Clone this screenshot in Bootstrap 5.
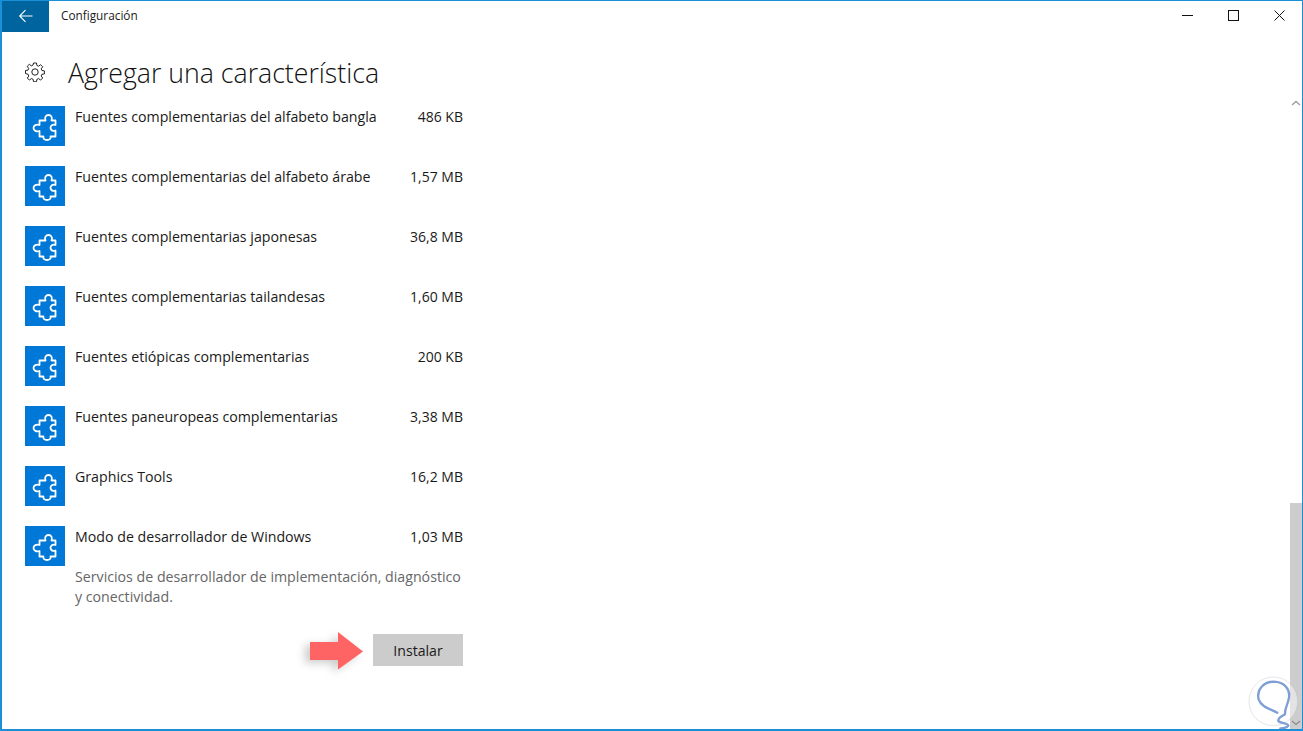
<!DOCTYPE html>
<html lang="es">
<head>
  <meta charset="UTF-8">
  <meta name="viewport" content="width=device-width, initial-scale=1.0">
  <title>Configuración</title>
  <link href="https://cdn.jsdelivr.net/npm/bootstrap@5.3.3/dist/css/bootstrap.min.css" rel="stylesheet">
  <style>
    html, body {
      height: 100%;
      overflow: hidden;
    }

    body {
      font-family: "Open Sans", "Liberation Sans", sans-serif;
      color: #1a1a1a;
      background: #fff;
    }

    .app-window {
      height: 731px;
      border: 1px solid #1b8fd8;
      border-width: 1px 1px 2px 2px;
      position: relative;
      overflow: hidden;
    }

    .title-bar {
      height: 31px;
    }

    .back-btn {
      width: 47px;
      background: #00659f;
      border: 0;
      padding: 0 0 2px;
    }

    .app-name {
      font-size: 11.8px;
      margin-left: 12px;
      padding-bottom: 2px;
    }

    .win-ctrl {
      width: 46px;
      padding-bottom: 2px;
    }

    .head-row {
      height: 74px;
      padding-left: 23px;
      padding-top: 6px;
    }

    .gear-icon {
      flex: none;
    }

    .page-title {
      font-size: 26.7px;
      font-weight: 300;
      margin: 2px 0 0 23px;
      color: #111;
    }

    .feature-list {
      width: 438px;
      margin-left: 23px;
    }

    .feature-row {
      height: 60px;
    }

    .feature-row.is-open {
      height: auto;
    }

    .plugin-tile {
      width: 40px;
      height: 40px;
      background: #0078d7;
      flex: none;
    }

    .feature-text {
      font-size: 14.2px;
      line-height: 20px;
      padding: 1px 0 0 10px;
    }

    .feature-size {
      font-size: 14px;
      line-height: 20px;
      padding-top: 1px;
    }

    .feature-desc {
      font-size: 14.2px;
      line-height: 20px;
      color: #666;
      margin: 0;
      padding: 1px 0 0 50px;
    }

    .install-row {
      margin-top: 18px;
    }

    .install-btn {
      width: 90px;
      height: 32px;
      padding: 1px 0 0;
      border: 0;
      border-radius: 0;
      background: #ccc;
      color: #1a1a1a;
      font-size: 14.1px;
    }

    .arrow-mark {
      margin-right: 5px;
      margin-top: 6px;
      overflow: visible;
      filter: drop-shadow(-5px 3px 4px rgba(0, 0, 0, .2));
    }

    .scroll-rail {
      width: 12px;
      flex: none;
    }

    .scroll-up {
      margin-top: -6px;
      margin-left: 1px;
    }

    .scroll-thumb {
      background: #cdcdcd;
      height: 226px;
      padding: 0 0 3px 1px;
    }

    .logo-mark {
      position: absolute;
      right: -1px;
      bottom: -2px;
    }
  </style>
</head>
<body>
  <svg width="0" height="0" class="d-block">
    <symbol id="puzzle" viewBox="0 0 40 40">
      <path d="M14.500 14.500h6c-1.200-3 .3-5.500 3-5.500s4.200 2.500 3 5.500h4V19c-3-1-5 .5-5 2.800s2 3.700 5 2.700v6h-5c.8 2.400-1.200 3.500-3.500 3.500s-4.300-1.100-3.500-3.500h-4V25c-3 1-6-.3-6-3s3-4 6-3z" fill="none" stroke="#fff" stroke-width="1.800" stroke-linejoin="round"/>
    </symbol>
  </svg>

  <div class="app-window d-flex flex-column">
    <div class="title-bar d-flex align-items-stretch flex-none">
      <button type="button" class="back-btn d-flex align-items-center justify-content-center" aria-label="Atrás">
        <svg width="16" height="14" viewBox="0 0 16 14"><path d="M14.500 7H2M7.500 1.200 1.700 7l5.800 5.800" fill="none" stroke="#fff" stroke-width="1.100"/></svg>
      </button>
      <span class="app-name d-flex align-items-center">Configuración</span>
      <div class="ms-auto d-flex">
        <div class="win-ctrl d-flex align-items-center justify-content-center">
          <svg width="11" height="11" viewBox="0 0 11 11"><path d="M0 5.500h11" stroke="#111" stroke-width="1"/></svg>
        </div>
        <div class="win-ctrl d-flex align-items-center justify-content-center">
          <svg width="11" height="11" viewBox="0 0 11 11"><rect x=".5" y=".5" width="10" height="10" fill="none" stroke="#111"/></svg>
        </div>
        <div class="win-ctrl d-flex align-items-center justify-content-center">
          <svg width="11" height="11" viewBox="0 0 11 11"><path d="M.5.500l10 10M10.500.500l-10 10" stroke="#111" stroke-width="1"/></svg>
        </div>
      </div>
    </div>

    <div class="head-row d-flex align-items-center">
      <svg class="gear-icon" width="20" height="20" viewBox="0 0 20 20">
        <circle cx="10" cy="10" r="3.200" fill="none" stroke="#222" stroke-width="1"/>
        <path d="M8.500 1h3l.4 2.500 1.700.7 2-1.500 2.100 2.100-1.500 2 .7 1.700 2.500.4v3l-2.500.4-.7 1.700 1.500 2-2.100 2.100-2-1.500-1.700.7-.4 2.500h-3l-.4-2.500-1.700-.7-2 1.500-2.100-2.100 1.500-2-.7-1.700L.5 11.500v-3l2.500-.4.7-1.700-1.500-2 2.100-2.100 2 1.500 1.700-.7z" fill="none" stroke="#222" stroke-width="1" stroke-linejoin="round"/>
      </svg>
      <h1 class="page-title">Agregar una característica</h1>
    </div>

    <div class="d-flex flex-grow-1">
      <div class="flex-grow-1">
        <div class="feature-list">
          <div class="feature-row d-flex">
            <div class="plugin-tile"><svg width="40" height="40"><use href="#puzzle"/></svg></div>
            <div class="feature-text flex-grow-1">Fuentes complementarias del alfabeto bangla</div>
            <div class="feature-size">486 KB</div>
          </div>
          <div class="feature-row d-flex">
            <div class="plugin-tile"><svg width="40" height="40"><use href="#puzzle"/></svg></div>
            <div class="feature-text flex-grow-1">Fuentes complementarias del alfabeto árabe</div>
            <div class="feature-size">1,57 MB</div>
          </div>
          <div class="feature-row d-flex">
            <div class="plugin-tile"><svg width="40" height="40"><use href="#puzzle"/></svg></div>
            <div class="feature-text flex-grow-1">Fuentes complementarias japonesas</div>
            <div class="feature-size">36,8 MB</div>
          </div>
          <div class="feature-row d-flex">
            <div class="plugin-tile"><svg width="40" height="40"><use href="#puzzle"/></svg></div>
            <div class="feature-text flex-grow-1">Fuentes complementarias tailandesas</div>
            <div class="feature-size">1,60 MB</div>
          </div>
          <div class="feature-row d-flex">
            <div class="plugin-tile"><svg width="40" height="40"><use href="#puzzle"/></svg></div>
            <div class="feature-text flex-grow-1">Fuentes etiópicas complementarias</div>
            <div class="feature-size">200 KB</div>
          </div>
          <div class="feature-row d-flex">
            <div class="plugin-tile"><svg width="40" height="40"><use href="#puzzle"/></svg></div>
            <div class="feature-text flex-grow-1">Fuentes paneuropeas complementarias</div>
            <div class="feature-size">3,38 MB</div>
          </div>
          <div class="feature-row d-flex">
            <div class="plugin-tile"><svg width="40" height="40"><use href="#puzzle"/></svg></div>
            <div class="feature-text flex-grow-1">Graphics Tools</div>
            <div class="feature-size">16,2 MB</div>
          </div>
          <div class="feature-row is-open">
            <div class="d-flex">
              <div class="plugin-tile"><svg width="40" height="40"><use href="#puzzle"/></svg></div>
              <div class="feature-text flex-grow-1">Modo de desarrollador de Windows</div>
              <div class="feature-size">1,03 MB</div>
            </div>
            <p class="feature-desc">Servicios de desarrollador de implementación, diagnóstico<br>y conectividad.</p>
            <div class="install-row d-flex justify-content-end align-items-center">
              <svg class="arrow-mark" width="64" height="44" viewBox="0 0 64 44">
                <path d="M6 11h28V1l25 19.500-25 18V29H6z" fill="#ff6464"/>
              </svg>
              <button type="button" class="btn install-btn">Instalar</button>
            </div>
          </div>
        </div>
      </div>
      <div class="scroll-rail d-flex flex-column justify-content-between">
        <svg class="scroll-up" width="10" height="6" viewBox="0 0 10 6"><path d="M1 5l4-3.500L9 5" fill="none" stroke="#a0a0a0" stroke-width="1.500"/></svg>
        <div class="scroll-thumb d-flex align-items-end">
          <svg width="10" height="6" viewBox="0 0 10 6"><path d="M1 1l4 3.500L9 1" fill="none" stroke="#8a8a8a" stroke-width="1.200"/></svg>
        </div>
      </div>
    </div>

    <svg class="logo-mark" width="60" height="60" viewBox="0 0 180 180">
      <circle cx="91" cy="91" r="73" fill="#fff" fill-opacity=".45" stroke="#aeb4c2" stroke-opacity=".5" stroke-width="2"/>
      <path d="M103 125C80 113 55 108 47 85 40 58 60 32 92 32c33 1 50 23 46 48-3 20-13 30-12 50-8 5-22 10-20 20 6 8 29 5 30 14-4 6-16 8-24 8" fill="none" stroke="#7f9fd4" stroke-width="7" stroke-linecap="round" stroke-linejoin="round"/>
    </svg>
  </div>

  <script src="https://cdn.jsdelivr.net/npm/bootstrap@5.3.3/dist/js/bootstrap.bundle.min.js"></script>
</body>
</html>
